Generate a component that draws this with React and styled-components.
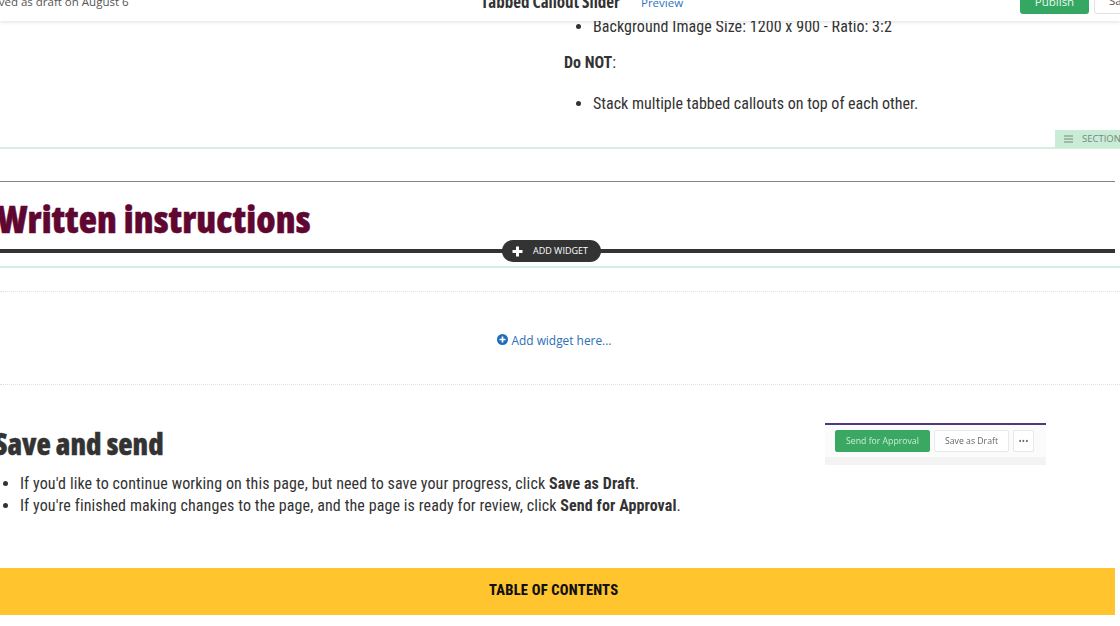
import React from "react";
import styled, { createGlobalStyle } from "styled-components";

const Global = createGlobalStyle`
  html, body { margin: 0; padding: 0; background: #fff; overflow: hidden; }
  body { font-family: "Roboto", "Liberation Sans", sans-serif; color: #333; }
  * { box-sizing: border-box; }
`;
const Page = styled.div`
  width: 1120px; height: 626px; overflow: hidden; display: flex; flex-direction: column;
`;
const TopBar = styled.header`
  height: 21px; flex: none; display: flex; align-items: flex-end; position: relative; z-index: 2;
  background: #fff; box-shadow: 0 1px 4px rgba(0,0,0,.13); overflow: hidden; padding-bottom: 7px;
`;
const Saved = styled.span`
  font: 11.5px/18px "Open Sans", sans-serif; color: #555; margin-left: -14px; margin-bottom: 3px; width: 495px; flex: none; white-space: nowrap;
`;
const Title = styled.span`
  font: 700 17px/20px "Open Sans", sans-serif; font-stretch: 75%; color: #333; white-space: nowrap; width: 160px; flex: none; margin-bottom: 2px;
`;
const Preview = styled.a`
  font: 11.5px/18px "Open Sans", sans-serif; color: #2f74c0; width: 379px; flex: none; margin-bottom: 2px;
`;
const PublishBtn = styled.span`
  width: 69px; height: 32px; flex: none; background: #34a862; border-radius: 3px; color: #e8f7ee;
  font: 11.5px/18px "Open Sans", sans-serif; display: flex; align-items: flex-end; justify-content: center; padding-bottom: 3px;
`;
const SaveBtn = styled.span`
  width: 70px; height: 32px; margin-left: 5px; flex: none; background: #fff; border: 1px solid #e2e2e2; border-radius: 3px; color: #555;
  font: 11.5px/18px "Open Sans", sans-serif; display: flex; align-items: flex-end; padding: 0 0 3px 14px;
`;
const TopSection = styled.section`
  height: 128px; flex: none; position: relative; border-bottom: 2px solid #d6eedf; padding: 0 0 0 564px;
`;
const BulletList = styled.ul`
  margin: ${p => p.$top || 0}px 0 0; padding: 0 0 0 ${p => p.$indent}px; font-size: 16px; line-height: 22px; color: #333;
  font-stretch: 75%; letter-spacing: ${p => p.$track || 0}px;
`;
const DoNot = styled.p`
  margin: 14px 0 19px; font-size: 16px; line-height: 22px; color: #333; font-stretch: 75%;
  b { font-weight: 700; }
`;
const SectionTag = styled.div`
  position: absolute; right: 0; bottom: -1px; width: 65px; height: 18px; background: #c9ecd7; color: #76877d;
  display: flex; align-items: center; gap: 9px; padding-left: 9px; overflow: hidden;
  font: 9.5px/18px "Open Sans", sans-serif; white-space: nowrap;
  svg { flex: none; }
`;
const HeadingSection = styled.section`
  height: 119px; flex: none; position: relative; border-bottom: 2px solid #d6eedf; padding-top: 32px;
`;
const ThinRule = styled.div`
  width: 1115px; height: 1px; background: #7d8886;
`;
const WrittenHeading = styled.h2`
  margin: 15px 0 1px -3px; font: 800 37.5px/44px "Open Sans", sans-serif; font-stretch: 75%; letter-spacing: .15px; color: #5f0631; white-space: nowrap;
  -webkit-text-stroke: .5px #5f0631;
`;
const ThickRule = styled.div`
  width: 1115px; height: 3.5px; background: #333; margin-top: 8px; position: relative;
`;
const AddPill = styled.div`
  position: absolute; left: 502px; top: -9px; width: 99px; height: 22px; background: #333; border-radius: 11px; color: #fff;
  display: flex; align-items: center; gap: 10px; padding-left: 10px; font: 9px/22px "Open Sans", sans-serif; white-space: nowrap;
  svg { flex: none; }
`;
const DropZone = styled.div`
  height: 94px; margin-top: 23px; flex: none; border-top: 1px dotted #dfdfdf; border-bottom: 1px dotted #dfdfdf;
  display: flex; align-items: center; justify-content: center; gap: 4px; color: #2a6fb8; font: 11.9px/18px "Open Sans", sans-serif; padding: 3px 12px 0 0;
  svg { flex: none; }
`;
const SaveSection = styled.section`
  flex: none; height: 183px; display: flex; padding-top: 38px;
`;
const SaveBody = styled.div`
  width: 825px; flex: none;
`;
const SaveHeading = styled.h3`
  margin: 4px 0 12px -6px; font: 800 29.5px/34px "Open Sans", sans-serif; font-stretch: 75%; color: #333; white-space: nowrap;
  -webkit-text-stroke: .4px #333;
`;
const Shot = styled.div`
  width: 221px; height: 42px; flex: none; border-top: 2px solid #4c3a7d; background: #f3f3f3; position: relative;
`;
const ShotRow = styled.div`
  height: 32px; background: #fbfbfb; display: flex; align-items: flex-start; gap: 4px; padding: 5px 0 0 10px; filter: blur(.3px);
`;
const ShotBtn = styled.span`
  height: 22px; width: ${p => p.$w}px; border-radius: 2px; display: flex; align-items: center; justify-content: center;
  font: 8.7px/22px "Open Sans", sans-serif; white-space: nowrap;
  background: ${p => p.$green ? "#3aa862" : "#fff"}; color: ${p => p.$green ? "#c9efd6" : "#666"};
  border: 1px solid ${p => p.$green ? "#3aa862" : "#e8e8e8"};
`;
const TocBar = styled.div`
  width: 1115px; height: 47px; flex: none; background: #ffc42e; color: #111; display: flex; align-items: center;
  font: 800 14.5px/18px "Roboto", sans-serif; font-stretch: 75%; letter-spacing: .22px; padding: 0 0 1px 489px;
`;

export default function App() {
  return (
    <Page>
      <Global />
      <TopBar>
        <Saved>Saved as draft on August 6</Saved>
        <Title>Tabbed Callout Slider</Title>
        <Preview>Preview</Preview>
        <PublishBtn>Publish</PublishBtn>
        <SaveBtn>Save</SaveBtn>
      </TopBar>
      <TopSection>
        <BulletList $indent={29} $top={-5} $track={.07}><li>Background Image Size: 1200 x 900 - Ratio: 3:2</li></BulletList>
        <DoNot><b>Do NOT</b>:</DoNot>
        <BulletList $indent={29}><li>Stack multiple tabbed callouts on top of each other.</li></BulletList>
        <SectionTag>
          <svg width="9" height="8" viewBox="0 0 9 8"><path d="M0 1h9M0 4h9M0 7h9" stroke="#76877d" strokeWidth="1.2" /></svg>
          SECTION
        </SectionTag>
      </TopSection>
      <HeadingSection>
        <ThinRule />
        <WrittenHeading>Written instructions</WrittenHeading>
        <ThickRule>
          <AddPill>
            <svg width="11" height="11" viewBox="0 0 11 11"><path d="M5.5 .5v10M.5 5.5h10" stroke="#fff" strokeWidth="3" /></svg>
            ADD WIDGET
          </AddPill>
        </ThickRule>
      </HeadingSection>
      <DropZone>
        <svg width="11" height="11" viewBox="0 0 11 11"><circle cx="5.5" cy="5.5" r="5.5" fill="#1f6cb8" /><path d="M5.5 2.5v6M2.5 5.5h6" stroke="#fff" strokeWidth="1.7" /></svg>
        Add widget here...
      </DropZone>
      <SaveSection>
        <SaveBody>
          <SaveHeading>Save and send</SaveHeading>
          <BulletList $indent={20} $track={.1}>
            <li>If you'd like to continue working on this page, but need to save your progress, click <b>Save as Draft</b>.</li>
            <li>If you're finished making changes to the page, and the page is ready for review, click <b>Send for Approval</b>.</li>
          </BulletList>
        </SaveBody>
        <Shot>
          <ShotRow>
            <ShotBtn $w={95} $green>Send for Approval</ShotBtn>
            <ShotBtn $w={75}>Save as Draft</ShotBtn>
            <ShotBtn $w={21}>•••</ShotBtn>
          </ShotRow>
        </Shot>
      </SaveSection>
      <TocBar>TABLE OF CONTENTS</TocBar>
    </Page>
  );
}
